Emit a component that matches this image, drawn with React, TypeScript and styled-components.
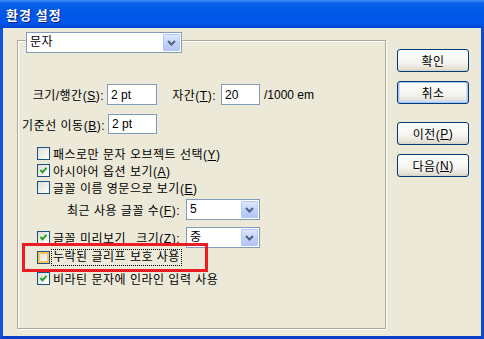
import React from 'react';
import styled, { createGlobalStyle } from 'styled-components';

const GlobalStyle = createGlobalStyle`
  html, body { margin: 0; padding: 0; }
  body {
    width: 484px; height: 339px; overflow: hidden; background: #ECE9D8;
    font-family: "Liberation Sans", "Noto Sans CJK KR", sans-serif;
    font-size: 12px; color: #000; letter-spacing: 0.5px;
  }
`;

const Window = styled.div`
  width: 484px; height: 339px; display: flex; flex-direction: column;
`;

const TitleBar = styled.div`
  height: 28px; flex: none; display: flex; align-items: center; padding-left: 6px;
  background: linear-gradient(to bottom, #3B8DF5 0%, #0A62EC 12%, #0056E6 45%, #0058EE 80%, #0046CC 100%);
`;

const Title = styled.span`
  color: #fff; font-weight: bold; font-size: 13px; letter-spacing: 1px;
  font-family: "Noto Sans CJK KR", sans-serif;
  text-shadow: 1px 1px 0 #0A1E80;
`;

const Frame = styled.div`
  flex: 1; display: flex; box-sizing: border-box;
  border-left: 3px solid #0B55E2; border-right: 3px solid #0B4BD6; border-bottom: 3px solid #0A3FC8;
  background: #ECE9D8; padding: 12px 0 0 14px;
`;

const GroupBox = styled.div`
  width: 369px; height: 289px; box-sizing: border-box; flex: none;
  border: 1px solid #ACA899;
  box-shadow: 1px 1px 0 #fff, inset 1px 1px 0 #fff;
  display: flex; flex-direction: column;
`;

const Header = styled.div`
  margin: -9px 0 0 8px; display: flex;
`;

const SelectBox = styled.div<{ $w: number }>`
  width: ${p => p.$w}px; height: 21px; box-sizing: border-box; flex: none;
  border: 1px solid #7F9DB9; background: #fff; display: flex; align-items: center;
`;

const SelectValue = styled.span`
  flex: 1; padding-left: 3px; line-height: 19px;
`;

const ArrowButton = styled.span`
  width: 17px; height: 17px; margin: 1px; box-sizing: border-box;
  border: 1px solid #B5C8F3; border-radius: 1px;
  background: linear-gradient(to bottom, #DDE7FD, #C0D1F8 60%, #B3C6F4);
  display: flex; align-items: center; justify-content: center;
`;

const Select = ({ w, value }: { w: number; value: string }) => (
  <SelectBox $w={w}>
    <SelectValue>{value}</SelectValue>
    <ArrowButton>
      <svg width="9" height="6" viewBox="0 0 9 6">
        <polyline points="1,1 4.5,4.5 8,1" fill="none" stroke="#4D6185" strokeWidth="2" />
      </svg>
    </ArrowButton>
  </SelectBox>
);

const FieldRow = styled.div<{ $mt: number; $h: number }>`
  margin-top: ${p => p.$mt}px; height: ${p => p.$h}px; display: flex; align-items: center;
`;

const Label = styled.span<{ $w: number; $pr?: number }>`
  width: ${p => p.$w}px; box-sizing: border-box; text-align: right;
  padding-right: ${p => p.$pr ?? 3}px; flex: none; white-space: nowrap;
`;

const Spacer = styled.span<{ $w: number }>`
  width: ${p => p.$w}px; flex: none;
`;

const TextInput = styled.div<{ $w: number }>`
  width: ${p => p.$w}px; height: 100%; box-sizing: border-box; flex: none;
  border: 1px solid #7F9DB9; background: #fff; padding-left: 3px; letter-spacing: 0;
  display: flex; align-items: center;
`;

const Unit = styled.span`
  margin-left: 4px; letter-spacing: 0;
`;

const CheckRow = styled.div<{ $mt: number }>`
  position: relative; margin-top: ${p => p.$mt}px; height: 17px;
  padding-left: 19px; display: flex; align-items: center; gap: 3px; white-space: nowrap;
`;

const Box = styled.span<{ $hot?: boolean }>`
  width: 13px; height: 13px; box-sizing: border-box; flex: none;
  border: 1px solid #1C5180;
  background: linear-gradient(135deg, #DCDCD7, #FFFFFF);
  box-shadow: ${p => (p.$hot ? 'inset 0 0 0 2px #F9C45A' : 'none')};
  display: flex; align-items: center; justify-content: center;
`;

const CheckBox = ({ checked, hot }: { checked?: boolean; hot?: boolean }) => (
  <Box $hot={hot}>
    {checked && (
      <svg width="9" height="9" viewBox="0 0 9 9">
        <polyline points="1.5,4 3.5,6.3 7.5,1.8" fill="none" stroke="#21A121" strokeWidth="2" />
      </svg>
    )}
  </Box>
);

const FocusText = styled.span`
  outline: 1px dotted #000; outline-offset: 0; padding: 0 1px; margin-left: -1px; line-height: 15px;
`;

const Highlight = styled.span`
  position: absolute; left: 4px; top: -6px; width: 186px; height: 29px;
  box-sizing: border-box; border: 3px solid #EC1C24; pointer-events: none;
`;

const SplitLeft = styled.span`
  width: 168px; flex: none; box-sizing: border-box; padding: 0 6px 0 19px;
  display: flex; align-items: center; gap: 3px; white-space: nowrap;
`;

const Grow = styled.span`
  flex: 1;
`;

const ButtonColumn = styled.div`
  margin: 9px 0 0 11px; display: flex; flex-direction: column;
`;

const Button = styled.div<{ $mt: number; $focus?: boolean }>`
  margin-top: ${p => p.$mt}px; width: 72px; height: 23px; box-sizing: border-box;
  border: 1px solid #003C74; border-radius: 3px;
  background: linear-gradient(to bottom, #FFFFFF 0%, #F5F4EF 60%, #E3E0D6 90%, #D6D0C5 100%);
  box-shadow: ${p => (p.$focus ? 'inset 0 0 0 1px #A9C3EE, inset 0 -1px 0 2px #CEDCF5' : 'none')};
  display: flex; align-items: center; justify-content: center;
`;

const U = styled.u`
  text-underline-offset: 1px;
`;

export default function App() {
  return (
    <>
      <GlobalStyle />
      <Window>
        <TitleBar>
          <Title>환경 설정</Title>
        </TitleBar>
        <Frame>
          <GroupBox>
            <Header>
              <Select w={156} value="문자" />
            </Header>
            <FieldRow $mt={31} $h={21}>
              <Label $w={89}>크기/행간(<U>S</U>):</Label>
              <TextInput $w={50}>2 pt</TextInput>
              <Spacer $w={15} />
              <Label $w={49} $pr={5}>자간(<U>T</U>):</Label>
              <TextInput $w={39}>20</TextInput>
              <Unit>/1000 em</Unit>
            </FieldRow>
            <FieldRow $mt={9} $h={20}>
              <Label $w={90}>기준선 이동(<U>B</U>):</Label>
              <TextInput $w={49}>2 pt</TextInput>
            </FieldRow>
            <CheckRow $mt={11}>
              <CheckBox />
              <span>패스로만 문자 오브젝트 선택(<U>Y</U>)</span>
            </CheckRow>
            <CheckRow $mt={0}>
              <CheckBox checked />
              <span>아시아어 옵션 보기(<U>A</U>)</span>
            </CheckRow>
            <CheckRow $mt={0}>
              <CheckBox />
              <span>글꼴 이름 영문으로 보기(<U>E</U>)</span>
            </CheckRow>
            <FieldRow $mt={3} $h={21}>
              <Label $w={168} $pr={6}>최근 사용 글꼴 수(<U>F</U>):</Label>
              <Select w={74} value="5" />
            </FieldRow>
            <FieldRow $mt={7} $h={21}>
              <SplitLeft>
                <CheckBox checked />
                <span>글꼴 미리보기</span>
                <Grow />
                <span>크기(<U>Z</U>):</span>
              </SplitLeft>
              <Select w={74} value="중" />
            </FieldRow>
            <CheckRow $mt={1}>
              <CheckBox hot />
              <FocusText>누락된 글리프 보호 사용</FocusText>
              <Highlight />
            </CheckRow>
            <CheckRow $mt={4}>
              <CheckBox checked />
              <span>비라틴 문자에 인라인 입력 사용</span>
            </CheckRow>
          </GroupBox>
          <ButtonColumn>
            <Button $mt={0}>확인</Button>
            <Button $mt={9} $focus>취소</Button>
            <Button $mt={18}>이전(<U>P</U>)</Button>
            <Button $mt={9}>다음(<U>N</U>)</Button>
          </ButtonColumn>
        </Frame>
      </Window>
    </>
  );
}
